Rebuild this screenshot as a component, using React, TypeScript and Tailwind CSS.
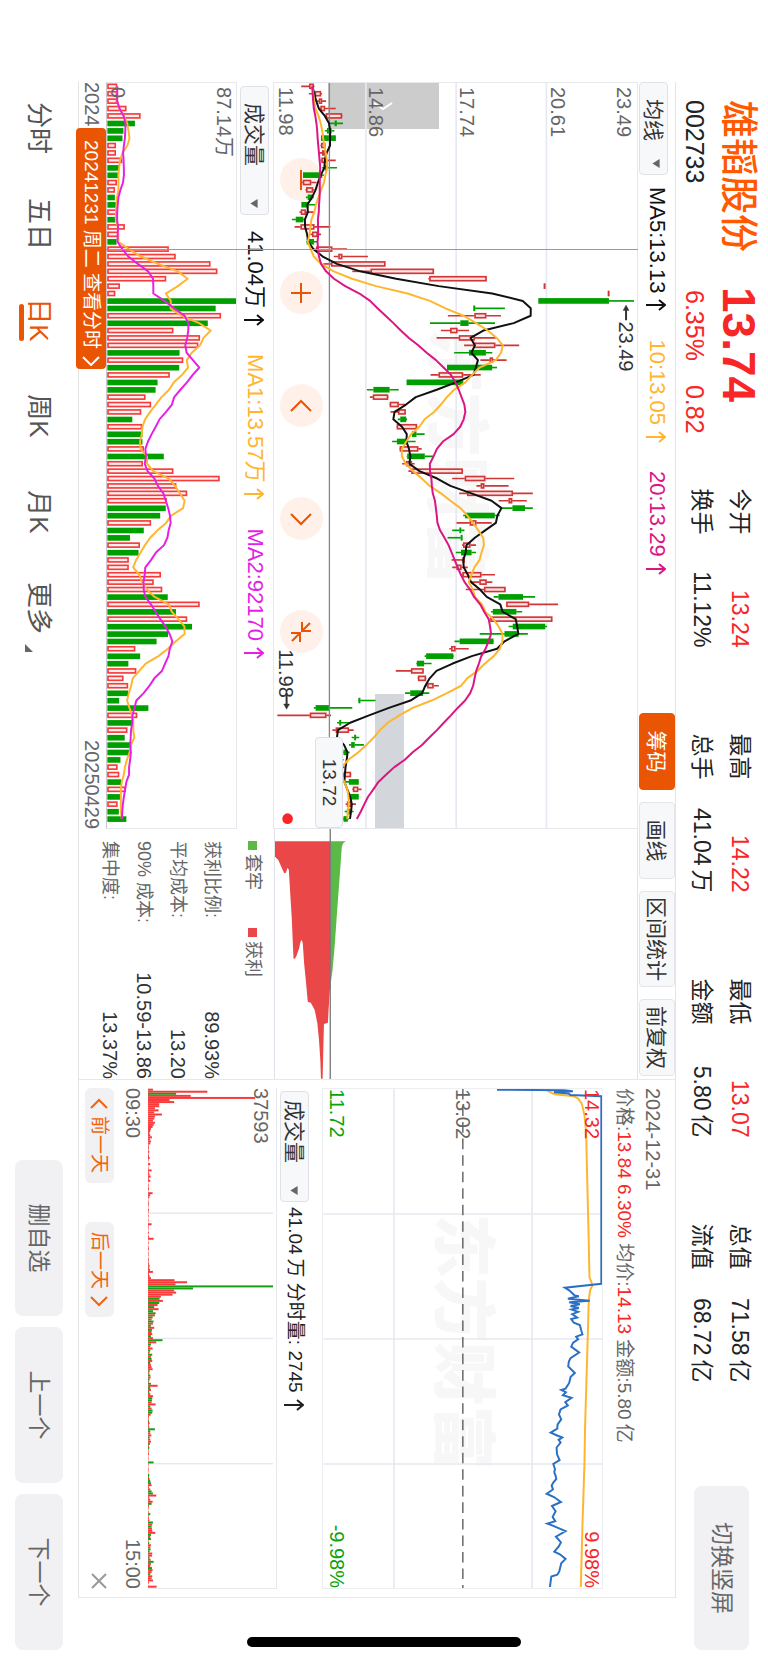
import { ReactNode } from 'react'
import clsx from 'clsx'

const RED = '#f83a3a'
const GREEN = '#009f00'
const STEP = 22.26
const PANE_W = 2241

// kind, low, high, body bottom, body top
type Candle = ['r' | 'g', number, number, number, number]

const candles: Candle[] = [
  ['r', 902, 942, 926, 940], ['r', 925, 965, 943, 962], ['r', 945, 977, 955, 965], ['r', 955, 1006, 960, 974],
  ['r', 975, 1026, 976, 1025], ['g', 986, 1028, 1003, 1009], ['g', 973, 1002, 980, 993], ['g', 962, 1006, 962, 1006],
  ['r', 960, 976, 962, 975], ['r', 955, 980, 965, 973], ['r', 960, 1006, 963, 976], ['g', 965, 1010, 973, 978],
  ['g', 908, 970, 908, 965], ['r', 903, 948, 907, 932], ['r', 915, 942, 917, 938], ['g', 916, 940, 922, 935],
  ['g', 903, 946, 903, 924], ['r', 897, 940, 901, 916], ['g', 874, 912, 886, 908], ['r', 882, 990, 900, 942],
  ['r', 930, 962, 935, 952], ['g', 917, 950, 919, 940], ['r', 945, 1040, 947, 996], ['r', 1000, 1103, 1014, 1026],
  ['r', 969, 1156, 992, 1156], ['r', 1056, 1302, 1111, 1302], ['r', 1285, 1461, 1288, 1461], ['r', 1634, 1638, 1634, 1638],
  ['r', 1827, 1831, 1827, 1831], ['g', 1617, 1905, 1617, 1829], ['g', 1422, 1516, 1422, 1426], ['r', 1344, 1504, 1424, 1460],
  ['g', 1290, 1486, 1382, 1406], ['r', 1323, 1408, 1351, 1373], ['r', 1310, 1490, 1377, 1425], ['r', 1393, 1559, 1422, 1487],
  ['g', 1363, 1478, 1408, 1458], ['r', 1442, 1521, 1470, 1480], ['g', 1342, 1492, 1342, 1477], ['r', 1292, 1443, 1316, 1390],
  ['g', 1220, 1390, 1220, 1390], ['g', 1100, 1196, 1120, 1168], ['r', 1109, 1165, 1118, 1164], ['r', 1168, 1215, 1169, 1196],
  ['r', 1171, 1218, 1194, 1217], ['g', 1193, 1221, 1201, 1218], ['r', 1189, 1252, 1190, 1251], ['g', 1233, 1274, 1236, 1249],
  ['g', 1176, 1247, 1191, 1220], ['r', 1198, 1265, 1199, 1255], ['g', 1220, 1302, 1222, 1274], ['r', 1206, 1244, 1218, 1236],
  ['r', 1225, 1390, 1234, 1389], ['r', 1357, 1544, 1395, 1457], ['r', 1430, 1527, 1443, 1454], ['r', 1378, 1600, 1402, 1540],
  ['r', 1497, 1582, 1527, 1538], ['g', 1505, 1600, 1539, 1576], ['g', 1390, 1500, 1396, 1485], ['r', 1370, 1476, 1410, 1430],
  ['g', 1357, 1394, 1379, 1384], ['g', 1343, 1388, 1383, 1388], ['r', 1387, 1429, 1390, 1412], ['g', 1368, 1429, 1384, 1415],
  ['r', 1355, 1395, 1388, 1395], ['r', 1357, 1404, 1370, 1385], ['r', 1384, 1486, 1388, 1445], ['r', 1414, 1478, 1439, 1461],
  ['r', 1398, 1519, 1453, 1518], ['g', 1482, 1607, 1497, 1570], ['r', 1519, 1676, 1520, 1589], ['g', 1474, 1568, 1480, 1550],
  ['r', 1470, 1659, 1472, 1659], ['g', 1527, 1643, 1540, 1637], ['g', 1440, 1585, 1515, 1557], ['g', 1364, 1483, 1380, 1481],
  ['r', 1348, 1407, 1354, 1367], ['g', 1274, 1362, 1279, 1360], ['g', 1249, 1295, 1251, 1272], ['r', 1187, 1272, 1233, 1271],
  ['r', 1253, 1279, 1254, 1278], ['r', 1278, 1317, 1282, 1301], ['g', 1215, 1288, 1231, 1269], ['g', 1074, 1126, 1076, 1080],
  ['g', 940, 1056, 946, 988], ['r', 830, 992, 928, 978], ['g', 1010, 1050, 1017, 1022], ['r', 996, 1060, 1006, 1046],
  ['g', 1054, 1077, 1062, 1067], ['g', 1046, 1091, 1053, 1063], ['g', 1028, 1048, 1030, 1040], ['g', 1000, 1030, 1005, 1025],
  ['r', 1000, 1032, 1005, 1028], ['r', 1020, 1053, 1030, 1052], ['g', 1036, 1076, 1046, 1075], ['r', 1056, 1084, 1058, 1074],
  ['g', 1046, 1076, 1048, 1075], ['r', 1036, 1067, 1040, 1053], ['g', 1033, 1060, 1040, 1050], ['g', 1028, 1045, 1030, 1042],
]

const volumes = [
  30, 30, 30, 58, 101, 84, 49, 46, 26, 26, 45, 37, 34, 29, 23, 23, 28, 29, 24, 53,
  35, 28, 187, 208, 314, 335, 179, 38, 24, 392, 330, 346, 306, 201, 282, 277, 220, 231, 219, 190,
  153, 147, 116, 133, 103, 76, 106, 107, 107, 111, 172, 108, 201, 342, 210, 243, 181, 178, 161, 133,
  111, 69, 99, 95, 65, 65, 163, 141, 167, 184, 281, 209, 243, 258, 185, 150, 85, 100, 64, 88,
  49, 63, 64, 36, 125, 91, 81, 61, 53, 73, 71, 40, 31, 36, 42, 56, 41, 31, 35, 58,
]

// one entry a minute, negative when the price went down
const minutes = [
  16, 180, -86, 130, 324, 66, 80, 35, 35, 22, 33, 20, 43, 22, 20, 16, 22, 18, 15, 10,
  8, 6, 8, 13, 7, 10, 8, 3, 4, 3, 5, 3, 4, 6, 3, 2, 8, 2, 3, 12,
  4, 6, 9, 4, 8, 2, 3, 3, 4, 2, 15, 8, 5, 2, 3, 4, 3, 2, 4, 3,
  2, 3, 2, 3, 2, 12, 3, 3, 2, 4, 2, 4, 18, 2, 3, 2, 3, 4, 2, 3,
  3, 2, 4, 3, 4, 6, 5, 7, 16, 4, 6, 10, 81, 119, 84, -378, -137, 80, 86, 75,
  40, -36, 46, -35, 30, -20, 33, -16, -24, 22, -15, 12, -18, 16, -10, 20, -13, 12, 14, -10,
  16, -45, 26, -10, 8, 15, -8, 6, -14, 10, -12, 14, -8, 10, 12, 15, -6, 5, -8, 9,
  -6, 4, -10, 30, -8, 10, -5, 8, 16, -14, -13, 12, 24, -8, 12, -15, -14, 9, 4, 3,
  -4, 6, 4, 5, -22, -8, 8, 11, -6, 8, 10, -7, 4, -5, 3, 3, 4, 2, 3, 2,
  -18, 3, 2, 3, 3, 2, -5, -4, 6, -8, -10, 12, 4, 8, -12, -16, 26, 5, 8, 15,
  -12, 4, 3, -2, 3, -8, 3, 4, 5, -16, 14, -12, 13, 14, 23, -10, 8, -10, 3, -5,
  10, 8, -9, -6, 14, 13, -6, 9, -18, 10, 8, -13, 15, 12, -8, 14, 12, 16, 4, 2,
  27,
]

const stats = [
  ['今开', '13.24', '换手', '11.12%'],
  ['最高', '14.22', '总手', '41.04万'],
  ['最低', '13.07', '金额', '5.80亿'],
  ['总值', '71.58亿', '流值', '68.72亿'],
]

const costs = [
  ['获利比例:', '89.93%'],
  ['平均成本:', '13.20'],
  ['90% 成本:', '10.59-13.86'],
  ['集中度:', '13.37%'],
]

const tabs = ['分时', '五日', '日K', '周K', '月K', '更多']

const priceLine =
  '2,317 4,115 7,88 10,145 14,100 18,95 22,2 589,2 601,112 609,99 624,83 627,70 634,103 640,37 645,99 651,67 656,95 662,70 667,92 674,72 681,90 691,75 696,93 707,85 714,67 729,63 742,59 749,78 757,72 767,87 779,93 797,69 814,95 824,100 839,102 859,82 871,95 889,99 906,110 910,123 917,109 926,118 934,92 947,111 957,103 969,125 984,130 999,123 1014,134 1027,135 1039,155 1047,137 1054,120 1061,131 1069,125 1084,137 1104,136 1122,128 1134,147 1149,142 1159,144 1170,140 1179,138 1190,147 1199,152 1211,148 1224,167 1234,145 1249,124 1261,151 1277,140 1294,149 1307,141 1314,165 1321,147 1337,110 1354,139 1371,124 1384,131 1399,144 1407,127 1421,110 1434,123 1459,129 1469,135 1474,153 1489,155 1506,157'
const averageLine =
  '4,165 10,155 16,143 22,85 29,72 44,61 79,53 129,48 299,44 459,40 569,38 581,33 594,29 609,36 639,40 749,43 1019,51 1134,53 1319,59 1506,64'
const profitArea =
  '37,1094 83,1094 93,1084 118,1073 133,1066 131,1061 116,1056 123,1052 193,1048 273,1043 323,1041 388,1038 390,1034 378,1028 358,1021 338,1017 333,1013 343,1010 403,1006 463,1000 518,995 521,986 528,982 543,974 583,966 633,961 693,957 749,955 749,950 663,948 585,946 581,934 543,932 478,928 478,926 37,926'
const trappedArea = '37,880 43,888 53,892 123,897 243,906 343,913 423,920 458,925 458,926 37,926'

const center = (i: number) => 10 + i * STEP

function average(values: number[], span: number, before: number[] = []) {
  const all = [...before, ...values]
  return values.map((_, i) => {
    const end = i + before.length + 1
    const part = all.slice(Math.max(0, end - span), end)
    return part.reduce((a, b) => a + b, 0) / part.length
  })
}

function Curve({ values, top, color }: { values: number[]; top: number; color: string }) {
  const points = values.map((v, i) => `${center(i).toFixed(1)},${(top - v).toFixed(1)}`).join(' ')
  return <polyline points={points} fill="none" stroke={color} strokeWidth="6" strokeLinejoin="round" />
}

function Up() {
  return (
    <svg viewBox="0 0 12 20" className="ml-[6px] inline-block h-5 w-3 align-middle" fill="none" stroke="currentColor" strokeWidth="2">
      <path d="M6 20V1M1 7l5-6 5 6" />
    </svg>
  )
}

function Amount({ text }: { text: string }) {
  const unit = text.match(/[万亿]$/)?.[0]
  if (!unit) return <>{text}</>
  return (
    <>
      {text.slice(0, -1)}
      <span className="ml-1">{unit}</span>
    </>
  )
}

function Picker({ label, value, className }: { label: string; value: string; className: string }) {
  return (
    <div className={clsx('relative h-[29px] shrink-0', className)}>
      <select
        aria-label={label}
        defaultValue={value}
        className="h-full w-full appearance-none rounded border border-[#dfe1e6] bg-[#f7f8fa] px-4 text-[21px] leading-none text-[#333]"
      >
        <option>{value}</option>
      </select>
      <svg viewBox="0 0 10 8" className="pointer-events-none absolute top-[11px] right-[7px] h-[8px] w-[9px]">
        <path d="M0 0h10L5 8z" fill="#666" />
      </svg>
    </div>
  )
}

function ToolButton({ children, active }: { children: ReactNode; active?: boolean }) {
  return (
    <button
      className={clsx(
        'h-9 min-w-[77px] rounded border px-[5px] text-[21px] leading-none whitespace-nowrap',
        active ? 'border-[#ea5504] bg-[#ea5504] text-white' : 'border-[#e3e5ea] bg-[#f7f8fa] text-[#333]'
      )}
    >
      {children}
    </button>
  )
}

function RoundButton({ label, children }: { label: string; children: ReactNode }) {
  return (
    <button aria-label={label} className="flex h-[43px] w-[43px] items-center justify-center rounded-full bg-[#fff1e9]">
      <svg viewBox="0 0 24 24" className="h-6 w-6" fill="none" stroke="#ea5504" strokeWidth="2">
        {children}
      </svg>
    </button>
  )
}

function Header() {
  return (
    <header className="flex h-[92px] shrink-0 items-start pr-[13px] pl-[100px] whitespace-nowrap">
      <div className="w-[187px]">
        <h1 className="flex h-[58px] items-center text-[38px] font-medium text-[#ff5a00]">雄韬股份</h1>
        <p className="flex h-8 items-center text-[25px] text-[#222]">002733</p>
      </div>
      <div className="text-[#f82727]">
        <p className="flex h-[58px] items-center text-[46px] font-bold">13.74</p>
        <p className="flex h-8 items-center gap-6 pl-[3px] text-[25px]">
          <span>6.35%</span>
          <span>0.82</span>
        </p>
      </div>
      <dl className="ml-[55px] flex gap-[86px] pt-[9px] text-[23px] text-[#222]">
        {stats.map(([a, av, b, bv], i) => (
          <div key={a} className="grid w-[159px] grid-cols-[auto_auto] justify-between">
            <dt className="flex h-[38px] items-center">{a}</dt>
            <dd className={clsx('flex h-[38px] items-center justify-end', i < 3 && 'text-[#f82727]')}><Amount text={av} /></dd>
            <dt className="flex h-[38px] items-center">{b}</dt>
            <dd className="flex h-[38px] items-center justify-end"><Amount text={bv} /></dd>
          </div>
        ))}
      </dl>
      <button className="mt-[19px] ml-auto h-[55px] w-[164px] rounded-lg bg-[#f1f1f4] text-[23px] text-[#666]">切换竖屏</button>
    </header>
  )
}

function CandleChart() {
  const closes = candles.map(([kind, , , low, high]) => (kind === 'r' ? high : low))
  const history = Array(19).fill(935)
  return (
    <div className="relative border-t border-r border-l border-[#e6e8ee]">
      <p className="absolute top-[41%] left-[33%] text-[64px] leading-none font-black text-[#f7f7f8]">东方财富</p>
      <div className="absolute top-[64%] left-[82%] h-[29px] w-[18%] bg-[#d3d6db]" />
      <button aria-label="展开" className="absolute top-[198px] left-0 flex h-[111px] w-[46px] items-center justify-center bg-[#ccc]">
        <svg viewBox="0 0 8 20" className="h-5 w-2" fill="none" stroke="#fff" strokeWidth="2">
          <path d="M1 1l6 9-6 9" />
        </svg>
      </button>
      <div className="absolute bottom-[6px] left-[75px] flex gap-[70px]">
        <RoundButton label="缩小"><path d="M2 12h20" /></RoundButton>
        <RoundButton label="放大"><path d="M2 12h20M12 2v20" /></RoundButton>
        <RoundButton label="左移"><path d="M17 2l-10 10 10 10" /></RoundButton>
        <RoundButton label="右移"><path d="M7 2l10 10-10 10" /></RoundButton>
        <RoundButton label="收起"><path d="M11 2v9H2M11 11L3 3M22 13h-9v9M13 13l8 8" /></RoundButton>
      </div>
      <svg viewBox={`0 0 ${PANE_W} 1095`} preserveAspectRatio="none" className="pointer-events-none absolute inset-0 h-full w-full">
        <path d="M0 273H2241M0 545H2241M0 817H2241" stroke="#e6e9f1" strokeWidth="5" />
        {candles.map(([kind, low, high, bottom, top], i) => (
          <g key={i} stroke={kind === 'r' ? '#d13636' : GREEN} strokeWidth="5">
            <path d={`M${center(i)} ${1914 - high}V${1914 - top}M${center(i)} ${1914 - bottom}V${1914 - low}`} />
            <rect x={center(i) - 6} y={1914 - top + 2} width="12" height={Math.max(1, top - bottom - 4)} fill={kind === 'r' ? '#fbe3e3' : GREEN} />
          </g>
        ))}
        <path d="M0 927H2241" stroke="#888" strokeWidth="4" />
        <Curve values={average(closes, 5, history)} top={1914} color="#111" />
        <Curve values={average(closes, 10, history)} top={1914} color="#ffb62e" />
        <Curve values={average(closes, 20, history)} top={1914} color="#dc1585" />
        <g stroke="#333" strokeWidth="6" fill="#333">
          <path d="M680 33h34M1836 1056h32" />
          <path d="M684 24l-16 9 16 9zM1868 1047l16 9-16 9z" strokeWidth="1" />
        </g>
        <circle cx="2213" cy="1053" r="16" fill="#f82727" />
      </svg>
      <div className="absolute inset-0 pl-1 text-[20px] leading-5 text-[#666]">
        <span className="absolute top-[3px]">23.49</span>
        <span className="absolute top-[69px]">20.61</span>
        <span className="absolute top-[160px]">17.74</span>
        <span className="absolute top-[251px]">14.86</span>
        <span className="absolute bottom-[2px]">11.98</span>
        <span className="absolute top-[1px] left-[32%] text-[#333]">23.49</span>
        <span className="absolute bottom-[2px] left-[76%] text-[#333]">11.98</span>
      </div>
      <span className="absolute top-[294px] right-0 flex h-[28px] w-[91px] items-center justify-center rounded border border-[#dcdfe5] bg-[#f7f8fa] text-[19px] text-[#333]">
        13.72
      </span>
    </div>
  )
}

function VolumeChart() {
  return (
    <div className="relative flex-1 border border-[#e6e8ee] border-b-[#c8c8cc]">
      <svg viewBox={`0 0 ${PANE_W} 392`} preserveAspectRatio="none" className="absolute inset-0 h-full w-full">
        {volumes.map((v, i) =>
          candles[i][0] === 'r' ? (
            <rect key={i} x={center(i) - 6} y={394 - v} width="12" height={v - 4} fill="#fff0f0" stroke={RED} strokeWidth="5" />
          ) : (
            <rect key={i} x={center(i) - 8} y={392 - v} width="17" height={v} fill={GREEN} />
          )
        )}
        <Curve values={average(volumes, 5)} top={392} color="#ffb62e" />
        <Curve values={average(volumes, 10)} top={392} color="#e61fe6" />
      </svg>
      <span className="absolute top-[2px] left-1 text-[20px] leading-5 text-[#666]">87.14万</span>
      <span className="absolute bottom-[1px] left-1 text-[20px] leading-5 text-[#666]">0</span>
    </div>
  )
}

function DailyPanel() {
  return (
    <section className="flex min-w-0 flex-col">
      <div className="flex h-[37px] shrink-0 items-start text-[22px] leading-9 whitespace-nowrap">
        <Picker label="主图指标" value="均线" className="mt-1 w-[93px]" />
        <span className="ml-3 text-[#111]">MA5:13.13<Up /></span>
        <span className="ml-7 text-[#ffb62e]">10:13.05<Up /></span>
        <span className="ml-7 text-[#dc1585]">20:13.29<Up /></span>
        <div className="ml-auto flex gap-3 pr-[3px]">
          <ToolButton active>筹码</ToolButton>
          <ToolButton>画线</ToolButton>
          <ToolButton>区间统计</ToolButton>
          <ToolButton>前复权</ToolButton>
        </div>
      </div>
      <div className="grid flex-1 grid-cols-[747fr_250fr] grid-rows-[365fr_195fr]">
        <CandleChart />
        <div className="relative border-t border-b border-[#dfe2e8]">
          <svg viewBox="0 0 750 1095" preserveAspectRatio="none" className="absolute inset-0 h-full w-full">
            <polygon points={trappedArea} fill="#5ab947" />
            <polygon points={profitArea} fill="#ea4848" />
            <path d="M0 927H750" stroke="#777" strokeWidth="4" />
          </svg>
        </div>
        <div className="flex min-w-0 flex-col border-t border-[#e6e8ee]">
          <div className="flex h-[36px] shrink-0 items-center pl-1 text-[22px] leading-none whitespace-nowrap">
            <Picker label="副图指标" value="成交量" className="w-[129px]" />
            <span className="ml-4 text-[#111]">41.04万<Up /></span>
            <span className="ml-7 text-[#ffb62e]">MA1:13.57万<Up /></span>
            <span className="ml-7 text-[#e61fe6]">MA2:92170<Up /></span>
          </div>
          <VolumeChart />
          <div className="relative flex h-[27px] shrink-0 items-center justify-between text-[20px] text-[#666]">
            <span>2024</span>
            <span>20250429</span>
            <button className="absolute top-0 left-[46px] flex h-[30px] w-[241px] items-center gap-[7px] rounded bg-[#ea5504] px-3 text-[19px] whitespace-nowrap text-white">
              20241231 周二 查看分时
              <svg viewBox="0 0 10 18" className="h-[18px] w-[10px] shrink-0" fill="none" stroke="#fff" strokeWidth="2">
                <path d="M1 1l8 8-8 8" />
              </svg>
            </button>
          </div>
        </div>
        <div className="pl-3 text-[18px] text-[#666]">
          <div className="flex h-[45px] items-center gap-[38px] pb-[3px]">
            <span className="flex items-center gap-1"><i className="h-[9px] w-[9px] bg-[#5ab947]" />套牢</span>
            <span className="flex items-center gap-1"><i className="h-[9px] w-[9px] bg-[#ea4848]" />获利</span>
          </div>
          <dl>
            {costs.map(([name, value]) => (
              <div key={name} className="flex h-[34px] items-center justify-between whitespace-nowrap">
                <dt>{name}</dt>
                <dd className="text-[20px] text-[#333]">{value}</dd>
              </div>
            ))}
          </dl>
        </div>
      </div>
    </section>
  )
}

function IntradayPanel() {
  return (
    <section className="flex min-w-0 flex-col border-r border-l border-[#e8e8ec] px-2 text-[#666]">
      <p className="mt-[11px] h-[22px] text-[20px] leading-[22px]">2024-12-31</p>
      <p className="mt-[7px] h-[22px] text-[19px] leading-[22px] whitespace-nowrap">
        价格:<span className="text-[#f82727]">13.84 6.30%</span> 均价:<span className="text-[#f82727]">14.13</span> 金额:5.80<span className="ml-1">亿</span>
      </p>
      <div className="relative mt-[10px] flex-[280] border border-[#eceef2] text-[20px] leading-5">
        <p className="absolute top-1/2 left-1/4 -translate-y-1/2 text-[64px] leading-none font-black text-[#f7f7f8]">东方财富</p>
        <svg viewBox="0 0 1509 841" preserveAspectRatio="none" className="absolute inset-0 h-full w-full" fill="none">
          <path d="M0 211H1509M0 628H1509M378 0V841M756 0V841M1134 0V841" stroke="#e6e9f1" strokeWidth="5" />
          <path d="M0 420H1509" stroke="#555" strokeWidth="4" strokeDasharray="32 18" />
          <polyline points={averageLine} stroke="#ffb62e" strokeWidth="6" />
          <polyline points={priceLine} stroke="#2a70c4" strokeWidth="6" />
        </svg>
        <span className="absolute top-0 left-0 text-[#f82727]">14.32</span>
        <span className="absolute top-0 right-0 text-[#f82727]">9.98%</span>
        <span className="absolute top-1/2 left-0 -translate-y-1/2">13.02</span>
        <span className="absolute bottom-1 left-0 text-[#0aa30a]">11.72</span>
        <span className="absolute right-0 bottom-1 text-[#0aa30a]">-9.98%</span>
      </div>
      <div className="flex h-[45px] shrink-0 items-center pt-[10px] pl-[3px] text-[19px] leading-none whitespace-nowrap text-[#222] [&_select]:px-2">
        <Picker label="分时指标" value="成交量" className="w-[111px]" />
        <span className="ml-[5px]">41.04<span className="ml-1">万</span> 分时量: 2745<Up /></span>
      </div>
      <div className="relative flex-[129] border-t border-r border-[#e6e8ee] text-[20px] leading-5">
        <svg viewBox="0 0 1509 387" preserveAspectRatio="none" className="absolute inset-0 h-full w-full">
          <path d="M378 9V387M756 9V387M1134 9V387" stroke="#e6e9f1" strokeWidth="5" />
          {minutes.map((v, i) => (
            <rect key={i} x={2 + i * 6.25} y={387 - Math.abs(v)} width="6" height={Math.abs(v)} fill={v < 0 ? '#16a016' : RED} />
          ))}
        </svg>
        <span className="absolute top-[5px] left-0">37593</span>
      </div>
      <div className="flex h-[30px] shrink-0 items-center justify-between text-[20px]">
        <span>09:30</span>
        <span>15:00</span>
      </div>
      <div className="flex h-[39px] shrink-0 items-start pt-1 text-[19px] leading-none text-[#f0640f]">
        <button className="flex h-[29px] w-[95px] items-center justify-center gap-[7px] rounded-md bg-[#f1f1f4]">
          <svg viewBox="0 0 11 18" className="h-[18px] w-[11px]" fill="none" stroke="currentColor" strokeWidth="2">
            <path d="M10 1L2 9l8 8" />
          </svg>
          前一天
        </button>
        <button className="ml-[39px] flex h-[29px] w-[95px] items-center justify-center gap-[7px] rounded-md bg-[#f1f1f4]">
          后一天
          <svg viewBox="0 0 11 18" className="h-[18px] w-[11px]" fill="none" stroke="currentColor" strokeWidth="2">
            <path d="M1 1l8 8-8 8" />
          </svg>
        </button>
        <button aria-label="关闭" className="ml-auto flex h-[29px] items-center">
          <svg viewBox="0 0 16 16" className="h-4 w-4" fill="none" stroke="#999" strokeWidth="2">
            <path d="M1 1l14 14M15 1L1 15" />
          </svg>
        </button>
      </div>
    </section>
  )
}

function Footer() {
  return (
    <footer className="flex h-[78px] shrink-0 items-center pr-[13px] pl-20 whitespace-nowrap">
      <nav className="flex">
        {tabs.map((tab) => (
          <button key={tab} className={clsx('relative h-12 w-24 text-[26px]', tab === '日K' ? 'text-[#ea5504]' : 'text-[#555]')}>
            {tab}
            {tab === '日K' && <i className="absolute bottom-1 left-[32px] h-[5px] w-[37px] rounded-full bg-[#ea5504]" />}
            {tab === '更多' && (
              <svg viewBox="0 0 8 8" className="absolute right-1 bottom-[10px] h-2 w-2">
                <path d="M8 0v8H0z" fill="#666" />
              </svg>
            )}
          </button>
        ))}
      </nav>
      <div className="ml-auto flex gap-[11px] text-[23px] text-[#666]">
        <button className="h-12 w-[156px] rounded-lg bg-[#f1f1f4]">删自选</button>
        <button className="h-12 w-[156px] rounded-lg bg-[#f1f1f4]">上一个</button>
        <button className="h-12 w-[156px] rounded-lg bg-[#f1f1f4]">下一个</button>
      </div>
    </footer>
  )
}

export default function App() {
  return (
    <div className="h-screen w-full overflow-hidden bg-white">
      {/* landscape screen on a portrait device */}
      <div className="relative flex h-[100vw] w-[100vh] origin-top-left translate-x-[100vw] rotate-90 flex-col font-['Liberation_Sans','Noto_Sans_CJK_SC',sans-serif]">
        <Header />
        <main className="relative mr-[65px] ml-[82px] grid flex-1 grid-cols-[997fr_519fr] border-t border-b border-[#e3e3e8]">
          <DailyPanel />
          <IntradayPanel />
          <div className="pointer-events-none absolute top-[37px] bottom-[27px] left-[11%] w-px bg-[#999]" />
        </main>
        <Footer />
        <div className="absolute top-1/2 right-4 h-[274px] w-[10px] -translate-y-1/2 rounded-full bg-black" />
      </div>
    </div>
  )
}
